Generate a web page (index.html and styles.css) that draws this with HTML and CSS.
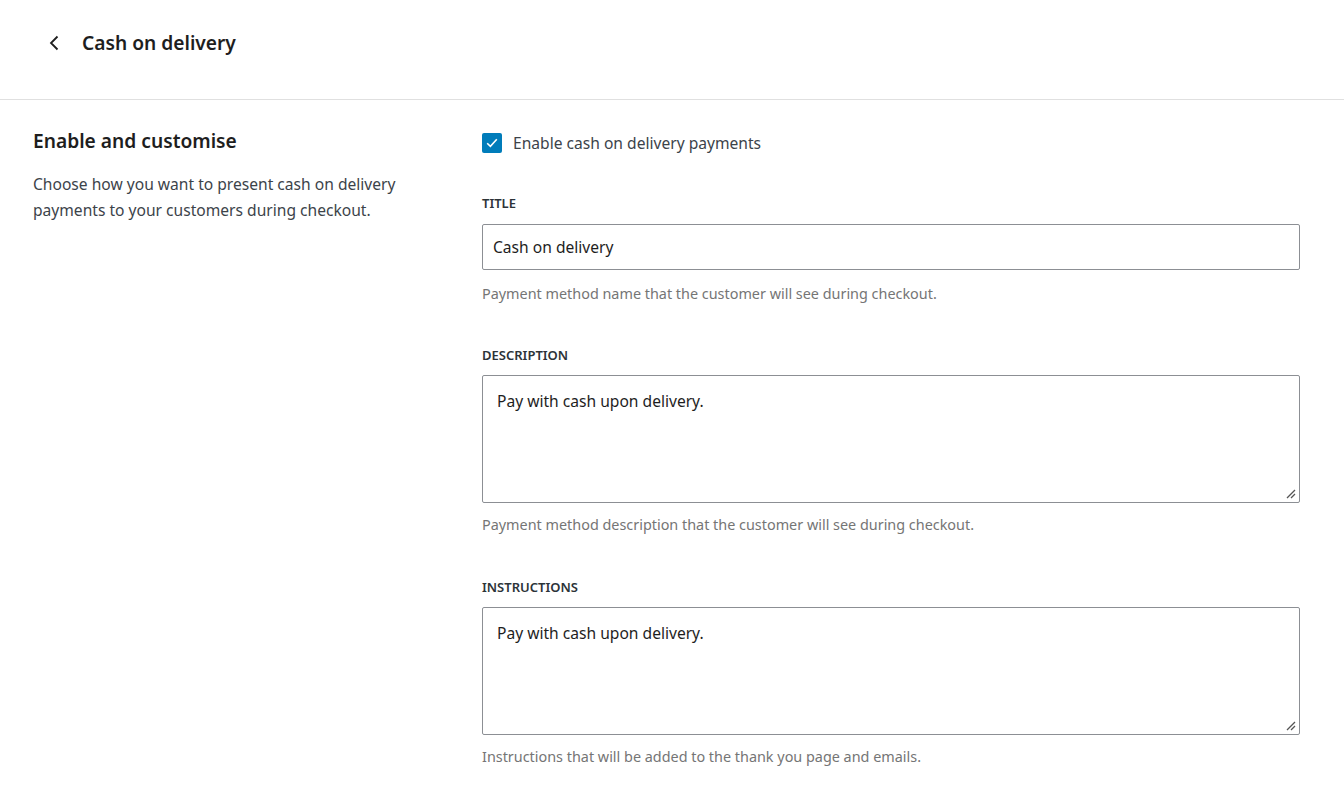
FILE: index.html
```html
<!DOCTYPE html>
<html lang="en">
<head>
<meta charset="utf-8">
<title>Cash on delivery</title>
<link rel="stylesheet" href="styles.css">
</head>
<body>
<header class="topbar">
  <button class="back" aria-label="Back">
    <svg width="24" height="24" viewBox="0 0 24 24"><path d="M15.5 5.5L9 12l6.5 6.5" fill="none" stroke="#1e1e1e" stroke-width="1.8"/></svg>
  </button>
  <h1 class="page-title">Cash on delivery</h1>
</header>
<main class="layout">
  <section class="intro">
    <h2 class="intro-title">Enable and customise</h2>
    <p class="intro-text">Choose how you want to present cash on delivery payments to your customers during checkout.</p>
  </section>
  <section class="form">
    <label class="check-row">
      <span class="checkbox">
        <svg width="20" height="20" viewBox="0 0 20 20"><path d="M5.2 10.2l3.2 3.1 6.4-7" fill="none" stroke="#fff" stroke-width="1.6"/></svg>
      </span>
      <span class="check-label">Enable cash on delivery payments</span>
    </label>
    <div class="field">
      <div class="field-label">TITLE</div>
      <div class="input">Cash on delivery</div>
      <p class="help">Payment method name that the customer will see during checkout.</p>
    </div>
    <div class="field">
      <div class="field-label">DESCRIPTION</div>
      <div class="textarea">Pay with cash upon delivery.
        <svg class="grip" width="10" height="10" viewBox="0 0 10 10"><path d="M1 9L9 1M5 9l4-4" stroke="#555" stroke-width="1.3"/></svg>
      </div>
      <p class="help help-ta">Payment method description that the customer will see during checkout.</p>
    </div>
    <div class="field field-last">
      <div class="field-label">INSTRUCTIONS</div>
      <div class="textarea">Pay with cash upon delivery.
        <svg class="grip" width="10" height="10" viewBox="0 0 10 10"><path d="M1 9L9 1M5 9l4-4" stroke="#555" stroke-width="1.3"/></svg>
      </div>
      <p class="help help-ta">Instructions that will be added to the thank you page and emails.</p>
    </div>
  </section>
</main>
</body>
</html>
```
FILE: styles.css
```css
* { box-sizing: border-box; }
body {
  margin: 0;
  background: #fff;
  font-family: "Noto Sans", "Open Sans", sans-serif;
  color: #1e1e1e;
}
.topbar {
  height: 100px;
  border-bottom: 1px solid #e0e0e0;
  display: flex;
  align-items: center;
  padding-left: 42px;
  padding-bottom: 14px;
}
.back {
  border: 0;
  background: none;
  padding: 0;
  width: 24px;
  height: 24px;
  margin-right: 16px;
  display: flex;
}
.page-title {
  margin: 0;
  font-size: 19.2px;
  font-weight: 600;
  line-height: 28px;
}
.layout {
  display: flex;
  padding: 27px 44px 0 33px;
}
.intro {
  width: 449px;
  flex: none;
}
.intro-title {
  margin: 0;
  font-size: 19.2px;
  font-weight: 600;
  line-height: 28px;
}
.intro-text {
  margin: 16px 0 0;
  width: 380px;
  font-size: 15.6px;
  line-height: 26px;
  color: #3c434a;
}
.form {
  flex: 1;
}
.check-row {
  display: flex;
  align-items: center;
  height: 32px;
}
.checkbox {
  width: 20px;
  height: 20px;
  border-radius: 2px;
  background: #007cba;
  display: flex;
  margin-right: 11px;
}
.check-label {
  font-size: 15.6px;
  color: #3c434a;
}
.field {
  margin-top: 36px;
}
.field + .field { margin-top: 43px; }
.field-last.field { margin-top: 44px; }
.field-label {
  font-size: 13px;
  font-weight: 600;
  color: #2c3338;
  line-height: 16px;
  margin-bottom: 13px;
}
.field + .field .field-label { margin-bottom: 12px; }
.input {
  height: 46px;
  border: 1px solid #8c8f94;
  border-radius: 2px;
  padding: 0 10px;
  display: flex;
  align-items: center;
  font-size: 15.6px;
}
.textarea {
  position: relative;
  height: 128px;
  border: 1px solid #8c8f94;
  border-radius: 2px;
  padding: 13px 14px;
  font-size: 15.6px;
  line-height: 24px;
}
.grip {
  position: absolute;
  right: 3px;
  bottom: 3px;
}
.help {
  margin: 14px 0 0;
  font-size: 14.4px;
  line-height: 20px;
  color: #757575;
}
.help-ta { margin-top: 12px; }
```
